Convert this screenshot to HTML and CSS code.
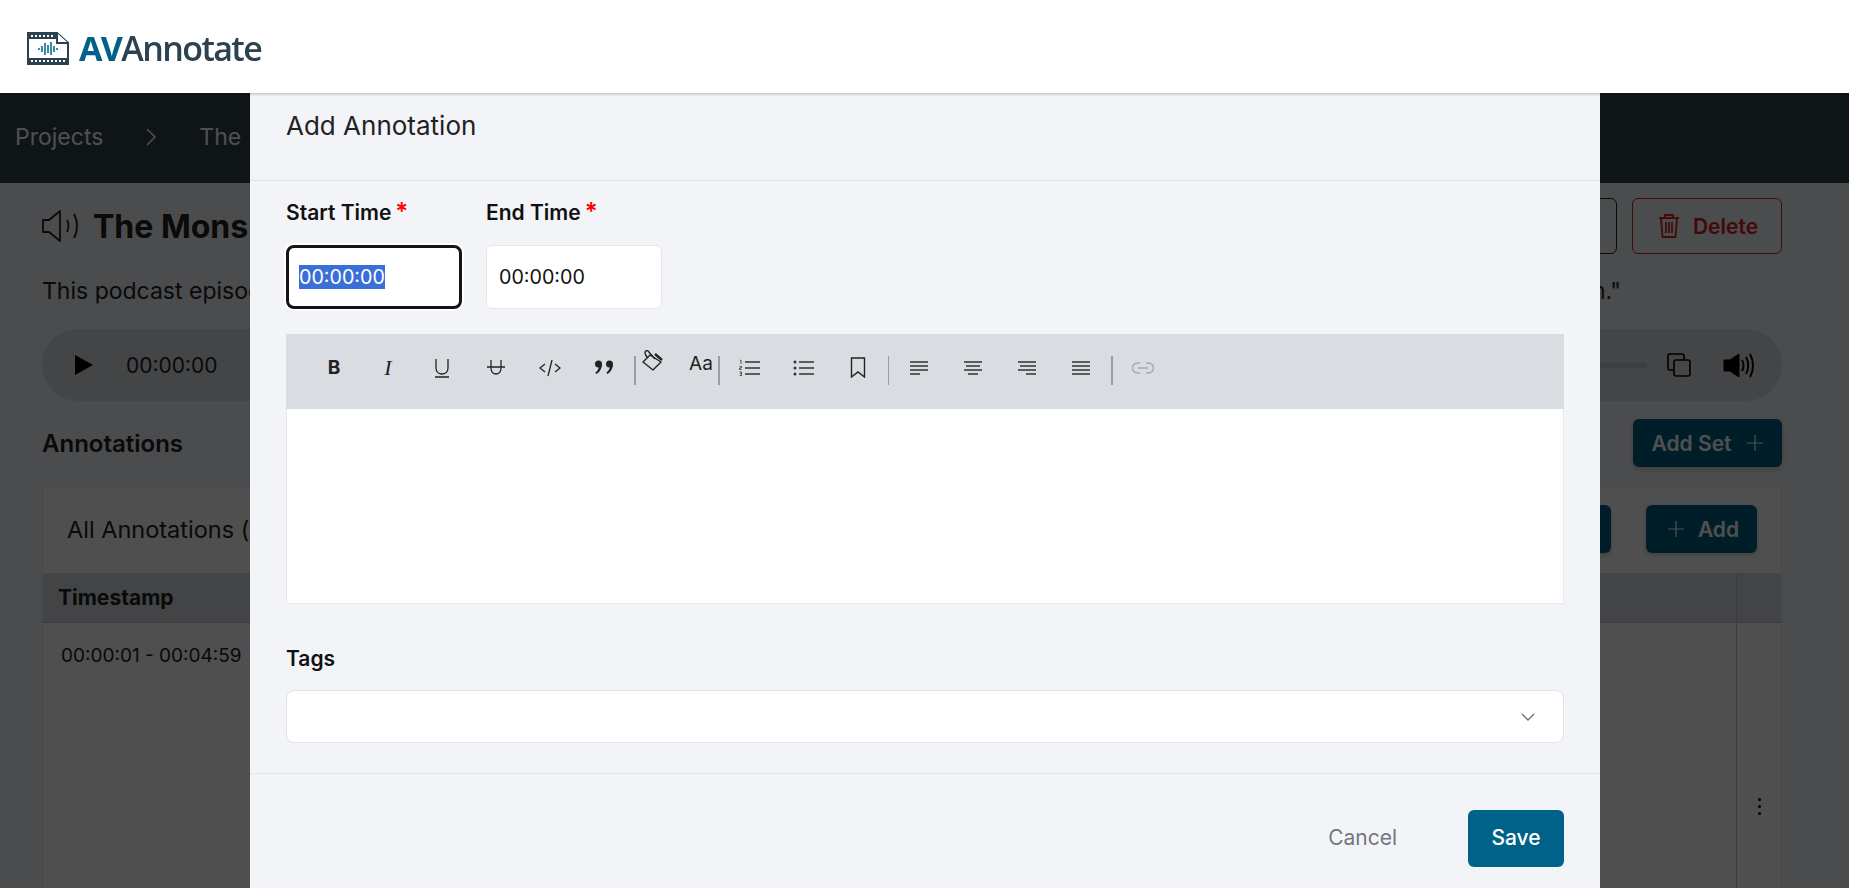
FILE: index.html
```html
<!DOCTYPE html>
<html lang="en">
<head>
    <meta charset="UTF-8">
    <meta name="viewport" content="width=device-width, initial-scale=1.0">
    <title>AVAnnotate</title>
    <link rel="stylesheet" href="styles.css">
</head>
<body>
    <header class="topbar">
        <svg class="logo-icon" width="42" height="33" viewBox="0 0 42 33">
            <path d="M1 1H30L41 11V32H1Z" fill="#fff" stroke="#2c4251" stroke-width="2"/>
            <path d="M1 1H30L33 4V7H1ZM1 26H41V32H1Z" fill="#2c4251"/>
            <path d="M30 1V11H41" fill="#fff" stroke="#2c4251" stroke-width="2"/>
            <path d="M4 3h2v2H4zM8 3h2v2H8zM12 3h2v2h-2zM16 3h2v2h-2zM20 3h2v2h-2zM24 3h2v2h-2zM4 28h2v2H4zM8 28h2v2H8zM12 28h2v2h-2zM16 28h2v2h-2zM20 28h2v2h-2zM24 28h2v2h-2zM28 28h2v2h-2zM32 28h2v2h-2zM36 28h2v2h-2z" fill="#fff"/>
            <path d="M12 16v2M15 14v6M18 11v12M21 13v8M24 10v13M27 14v6M30 16v2" stroke="#006288" stroke-width="1.5"/>
        </svg>
        <span class="logo-text"><b>AV</b>Annotate</span>
    </header>

    <div class="page">
        <nav class="crumbs">
            <span>Projects</span>
            <svg width="14" height="20" viewBox="0 0 14 20" fill="none" stroke="#fff" stroke-width="1.6"><path d="M3 2l8 8-8 8"/></svg>
            <span>The</span>
        </nav>
        <main class="content">
            <div class="title-row">
                <svg width="38" height="32" viewBox="0 0 38 32" fill="none" stroke="#222" stroke-width="1.8"><path d="M1 10h6L18 1v30L7 22H1Z" stroke-linejoin="round"/><path d="M25 10c2 4 2 8 0 12M32 4c4 7 4 17 0 24"/></svg>
                <h1>The Mons</h1>
                <button class="outline-btn edit-btn"></button>
                <button class="outline-btn delete-btn">
                    <svg width="20" height="24" viewBox="0 0 20 24" fill="none" stroke="currentColor" stroke-width="1.800"><path d="M0 4h20M6 4V1h8v3M2 4l1.500 19h13L18 4M7 8v11M10 8v11M13 8v11"/></svg>
                    Delete
                </button>
            </div>
            <p class="description"><span>This podcast episode</span><span>n."</span></p>
            <div class="player">
                <svg width="18" height="20" viewBox="0 0 18 20"><path d="M0 0L18 10L0 20Z" fill="#000"/></svg>
                <span class="player-time">00:00:00</span>
                <div class="track"></div>
                <svg width="24" height="24" viewBox="0 0 24 24" fill="none" stroke="#000" stroke-width="1.600"><rect x="1" y="1" width="16" height="16" rx="2"/><rect x="7" y="7" width="16" height="16" rx="2" fill="#dcdee1"/></svg>
                <svg class="volume" width="31" height="27" viewBox="0 0 31 27" fill="none" stroke="#000" stroke-width="2"><path d="M1 8h6l9-6v23l-9-6H1Z" fill="#000" stroke-width="1"/><path d="M19 8c2 3 2 8 0 11M23 5c3 5 3 12 0 17M27 2c4 7 4 16 0 23"/></svg>
            </div>
            <div class="section-row">
                <h2>Annotations</h2>
                <button class="primary-btn">Add Set <svg class="plus" width="16" height="16" viewBox="0 0 16 16" stroke="#fff" stroke-width="1.200"><path d="M8 0v16M0 8h16"/></svg></button>
            </div>
            <section class="panel">
                <div class="panel-head">
                    <span>All Annotations (</span>
                    <button class="primary-btn ghost-btn"></button>
                    <button class="primary-btn add-btn"><svg class="plus" width="16" height="16" viewBox="0 0 16 16" stroke="#fff" stroke-width="1.200"><path d="M8 0v16M0 8h16"/></svg> Add</button>
                </div>
                <div class="table-head">
                    <span class="cell-main">Timestamp</span>
                    <span class="cell-menu"></span>
                </div>
                <div class="table-row">
                    <span class="cell-main">00:00:01 - 00:04:59</span>
                    <span class="cell-menu"><i></i><i></i><i></i></span>
                </div>
            </section>
        </main>
    </div>

    <div class="overlay"></div>

    <div class="modal">
        <h3 class="modal-title">Add Annotation</h3>
        <div class="modal-body">
            <div class="time-fields">
                <div class="field">
                    <label>Start Time<em>*</em></label>
                    <div class="time-input focused"><span class="selected">00:00:00</span></div>
                </div>
                <div class="field">
                    <label>End Time<em>*</em></label>
                    <div class="time-input">00:00:00</div>
                </div>
            </div>

            <div class="toolbar">
                <span class="tool tool-text bold">B</span>
                <span class="tool tool-text italic">I</span>
                <span class="tool"><svg width="18" height="20" viewBox="0 0 18 20" fill="none" stroke="#222" stroke-width="1.300"><path d="M3 1v9c0 8 12 8 12 0V1M2 19h14"/></svg></span>
                <span class="tool"><svg width="20" height="20" viewBox="0 0 20 20" fill="none" stroke="#222" stroke-width="1.300"><path d="M5 2v8c0 8 10 8 10 0V2M1 9h18"/></svg></span>
                <span class="tool"><svg width="22" height="18" viewBox="0 0 22 18" fill="none" stroke="#222" stroke-width="1.300"><path d="M6 5L1 9l5 4M16 5l5 4-5 4M13 1L9 17"/></svg></span>
                <span class="tool"><svg width="20" height="15" viewBox="0 0 20 15" fill="#222"><circle cx="4.500" cy="4" r="3.500"/><circle cx="15.500" cy="4" r="3.500"/><path d="M8 4c0 5-3 9-6 10l-.5-1.500C4 11 5 8 5 5zM19 4c0 5-3 9-6 10l-.5-1.500C15 11 16 8 16 5z"/></svg></span>
                <span class="sep"></span>
                <span class="tool tool-small raised"><svg width="22" height="22" viewBox="0 0 22 22" fill="none" stroke="#222" stroke-width="1.400" stroke-linejoin="round"><path d="M1 12l7-7 11 7-8 8Z"/><path d="M3 3c0-2 2-3 3-2l7 8"/><path d="M3 3c0 2 1 3 3 5"/><path d="M13 4l7 6" stroke-width="2.400"/></svg></span>
                <span class="tool-gap"></span>
                <span class="tool tool-small tool-text aa">Aa</span>
                <span class="sep"></span>
                <span class="tool"><svg width="22" height="18" viewBox="0 0 22 18" fill="none" stroke="#333" stroke-width="1.600"><path d="M6 3h15M6 9h15M6 15h15"/><path d="M1 1.500l1-.5v4M.5 7.500h2v1.500h-2v1.500h2M.5 13h2v3.500h-2M1 14.700h1.500" stroke-width=".8"/></svg></span>
                <span class="tool"><svg width="22" height="18" viewBox="0 0 22 18" fill="none" stroke="#333" stroke-width="1.600"><path d="M6 3h15M6 9h15M6 15h15"/><circle cx="2" cy="3" r="1.500" fill="#333" stroke="none"/><circle cx="2" cy="9" r="1.500" fill="#333" stroke="none"/><circle cx="2" cy="15" r="1.500" fill="#333" stroke="none"/></svg></span>
                <span class="tool"><svg width="16" height="21" viewBox="0 0 16 21" fill="none" stroke="#222" stroke-width="1.400"><path d="M1.500 1h13v19L8 15l-6.500 5Z"/></svg></span>
                <span class="sep thin"></span>
                <span class="tool"><svg width="20" height="16" viewBox="0 0 20 16" fill="none" stroke="#333" stroke-width="1.400"><path d="M1 2h18M1 6h18M1 10h18M1 14h10"/></svg></span>
                <span class="tool"><svg width="20" height="16" viewBox="0 0 20 16" fill="none" stroke="#333" stroke-width="1.400"><path d="M1 2h18M3 6h14M1 10h18M5 14h10"/></svg></span>
                <span class="tool"><svg width="20" height="16" viewBox="0 0 20 16" fill="none" stroke="#333" stroke-width="1.400"><path d="M1 2h18M3 6h16M1 10h18M9 14h10"/></svg></span>
                <span class="tool"><svg width="20" height="16" viewBox="0 0 20 16" fill="none" stroke="#333" stroke-width="1.400"><path d="M1 2h18M1 6h18M1 10h18M1 14h18"/></svg></span>
                <span class="sep"></span>
                <span class="tool"><svg width="22" height="12" viewBox="0 0 22 12" fill="none" stroke="#a4a7ac" stroke-width="1.400"><path d="M8 1H5.500a5 5 0 0 0 0 10H8M14 1h2.500a5 5 0 0 1 0 10H14M6 6h10"/></svg></span>
            </div>
            <div class="editor"></div>

            <label class="tags-label">Tags</label>
            <div class="select">
                <svg width="14" height="8" viewBox="0 0 14 8" fill="none" stroke="#6b6f76" stroke-width="1.300"><path d="M1 1l6 6 6-6"/></svg>
            </div>
        </div>
        <div class="modal-foot">
            <button class="cancel-btn">Cancel</button>
            <button class="save-btn">Save</button>
        </div>
    </div>
</body>
</html>
```

FILE: styles.css
```css
* {
    box-sizing: border-box;
}
html, body {
    height: 100%;
}
body {
    margin: 0;
    font-family: 'Inter', 'Liberation Sans', sans-serif;
    background: #f3f4f8;
    color: #222;
    overflow: hidden;
}
button {
    font-family: inherit;
}

/* top bar stays above the modal */
.topbar {
    position: relative;
    z-index: 3;
    height: 93px;
    display: flex;
    align-items: center;
    gap: 10px;
    padding: 3px 0 0 27px;
    background: #fff;
    box-shadow: 0 1px 3px rgba(0, 0, 0, 0.25);
}
.logo-text {
    font-family: 'Open Sans', sans-serif;
    font-size: 34px;
    font-weight: 600;
    letter-spacing: -1.6px;
    color: #2c4251;
}
.logo-text b {
    font-weight: 700;
    color: #006288;
}

/* page behind the dialog */
.crumbs {
    height: 90px;
    display: flex;
    align-items: center;
    gap: 41px;
    padding: 0 0 2px 15px;
    background: #30414a;
    color: #fff;
    font-size: 23px;
}
.content {
    padding: 15px 67px 0 42px;
}
.title-row {
    display: flex;
    align-items: center;
    height: 56px;
}
.title-row h1 {
    flex: 1;
    margin: 0 0 0 13px;
    font-size: 32px;
    font-weight: 700;
}
.outline-btn {
    height: 56px;
    background: none;
    border-radius: 6px;
    font-size: 21px;
    font-weight: 600;
}
.edit-btn {
    width: 140px;
    border: 1px solid #222;
}
.delete-btn {
    width: 150px;
    margin-left: 15px;
    padding-left: 9px;
    border: 1px solid #d82020;
    color: #d82020;
    display: flex;
    align-items: center;
    justify-content: center;
    gap: 14px;
}
.description {
    display: flex;
    justify-content: space-between;
    margin: 20px 0 0;
    padding-right: 161px;
    font-size: 23px;
    line-height: 34px;
}
.player {
    height: 72px;
    margin-top: 21px;
    padding: 0 28px 0 33px;
    display: flex;
    align-items: center;
    border-radius: 36px;
    background: #dcdee1;
}
.player-time {
    margin-left: 33px;
    font-size: 21px;
}
.track {
    flex: 1;
    height: 5px;
    margin: 0 20px 0 300px;
    border-radius: 3px;
    background: #c8cacd;
}
.volume {
    margin-left: 32px;
}
.section-row {
    display: flex;
    align-items: center;
    justify-content: space-between;
    margin-top: 18px;
}
.section-row h2 {
    margin: 0;
    font-size: 24px;
    font-weight: 600;
}
.primary-btn {
    height: 48px;
    display: flex;
    align-items: center;
    justify-content: center;
    gap: 14px;
    border: none;
    border-radius: 6px;
    background: #006288;
    color: #fff;
    font-size: 21px;
    font-weight: 600;
    box-shadow: 0 2px 5px rgba(0, 0, 0, 0.2);
}
.section-row .primary-btn {
    width: 149px;
    gap: 16px;
}
.panel {
    margin-top: 19px;
    background: #fff;
    border: 1px solid #e6e7eb;
    height: 420px;
}
.panel-head {
    height: 86px;
    display: flex;
    align-items: center;
    gap: 35px;
    padding: 0 24px 2px;
    font-size: 23.500px;
}
.panel-head span:first-child {
    flex: 1;
}
.ghost-btn {
    width: 120px;
}
.add-btn {
    width: 111px;
    padding-left: 10px;
}
.table-head, .table-row {
    display: flex;
}
.table-head {
    height: 50px;
    align-items: center;
    background: #d9dce1;
    border-bottom: 1px solid #c4c6ca;
    font-size: 21px;
    font-weight: 700;
}
.table-row {
    height: 300px;
    font-size: 19px;
}
.cell-main {
    flex: 1;
    padding-left: 15px;
}
.table-row .cell-main {
    padding: 21px 0 0 18px;
}
.cell-menu {
    width: 45px;
    height: 100%;
    border-left: 1px solid #c4c6ca;
}
.table-row .cell-menu {
    display: flex;
    flex-direction: column;
    align-items: center;
    gap: 4px;
    padding-top: 175px;
}
.cell-menu i {
    width: 3px;
    height: 3px;
    border-radius: 50%;
    background: #000;
}

.overlay {
    position: fixed;
    inset: 0;
    z-index: 1;
    background: rgba(0, 0, 0, 0.69);
}

/* dialog */
.modal {
    position: fixed;
    top: 93px;
    left: 250px;
    bottom: 0;
    z-index: 2;
    width: 1350px;
    background: #f3f4f8;
}
.modal-title {
    height: 88px;
    margin: 0;
    padding: 16px 36px 0;
    border-bottom: 1px solid #e4e5ea;
    font-size: 26px;
    font-weight: 400;
    line-height: 34px;
    color: #222;
}
.modal-body {
    padding: 18px 36px 0;
}
.time-fields {
    display: flex;
    gap: 24px;
}
.field label, .tags-label {
    display: block;
    font-size: 21px;
    font-weight: 600;
    line-height: 28px;
    color: #111;
}
.field em {
    margin-left: 4px;
    font-style: normal;
    font-size: 24px;
    line-height: 20px;
    color: #f00;
}
.time-input {
    width: 176px;
    height: 64px;
    margin-top: 18px;
    padding-left: 12px;
    display: flex;
    align-items: center;
    border: 1px solid #e6e7eb;
    border-radius: 6px;
    background: #fff;
    font-size: 19.700px;
    color: #111;
}
.time-input.focused {
    border: 3px solid #141414;
    border-radius: 8px;
    box-shadow: 0 0 0 2px #fff;
    padding-left: 10px;
}
.selected {
    background: #3a6fd8;
    color: #fff;
    line-height: 24px;
}
.toolbar {
    height: 75px;
    margin-top: 25px;
    padding: 21px 0 0 21px;
    display: flex;
    align-items: flex-start;
    background: #d9dce1;
}
.tool {
    width: 54px;
    height: 25px;
    flex: none;
    display: flex;
    align-items: center;
    justify-content: center;
}
.tool-text {
    color: #222;
    font-size: 19px;
}
.bold {
    font-weight: 700;
}
.italic {
    font-family: 'Liberation Serif', serif;
    font-style: italic;
    font-size: 22px;
}
.tool-small {
    width: 28px;
}
.tool-gap {
    width: 20px;
    flex: none;
}
.raised {
    margin-top: -7px;
}
.aa {
    margin-top: -4px;
}
.sep {
    width: 2px;
    height: 29px;
    flex: none;
    margin: 1px 3px 0;
    background: #9b9da1;
}
.sep.thin {
    width: 1px;
}
.editor {
    height: 195px;
    background: #fff;
    border: 1px solid #e6e7eb;
    border-top: none;
}
.tags-label {
    margin-top: 41px;
}
.select {
    height: 53px;
    margin-top: 17px;
    padding-right: 28px;
    display: flex;
    align-items: center;
    justify-content: flex-end;
    background: #fff;
    border: 1px solid #e2e3e8;
    border-radius: 8px;
}
.modal-foot {
    margin-top: 30px;
    padding: 36px 36px 0 0;
    border-top: 1px solid #e4e5ea;
    display: flex;
    justify-content: flex-end;
    align-items: center;
    gap: 71px;
}
.cancel-btn {
    border: none;
    background: none;
    padding: 0 0 2px;
    font-size: 21px;
    color: #74777f;
}
.save-btn {
    width: 96px;
    height: 57px;
    padding: 0 0 2px;
    border: none;
    border-radius: 6px;
    background: #006288;
    color: #fff;
    font-size: 21px;
    font-weight: 500;
}
```
